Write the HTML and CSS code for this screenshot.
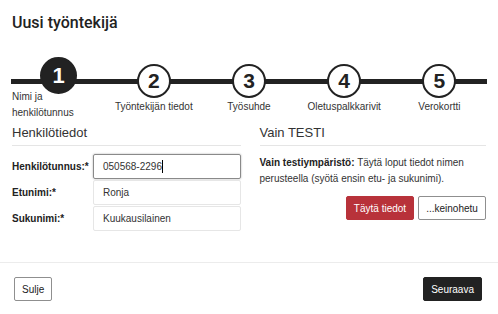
FILE: index.html
```html
<!DOCTYPE html>
<html lang="fi">
<head>
<meta charset="utf-8">
<title>Uusi työntekijä</title>
<link rel="stylesheet" href="styles.css">
</head>
<body>
<div class="page">
  <h1 class="title">Uusi työntekijä</h1>
  <div class="steps">
    <div class="step step-active"><div class="circle">1</div><div class="step-label">Nimi ja henkilötunnus</div></div>
    <div class="step"><div class="circle">2</div><div class="step-label">Työntekijän tiedot</div></div>
    <div class="step"><div class="circle">3</div><div class="step-label">Työsuhde</div></div>
    <div class="step"><div class="circle">4</div><div class="step-label">Oletuspalkkarivit</div></div>
    <div class="step"><div class="circle">5</div><div class="step-label">Verokortti</div></div>
  </div>
  <div class="columns">
    <section class="col">
      <h2 class="sec-title">Henkilötiedot</h2>
      <div class="form-row">
        <span class="field-label">Henkilötunnus:*</span>
        <div class="input input-focused">050568-2296<span class="caret"></span></div>
      </div>
      <div class="form-row">
        <span class="field-label">Etunimi:*</span>
        <div class="input">Ronja</div>
      </div>
      <div class="form-row">
        <span class="field-label">Sukunimi:*</span>
        <div class="input">Kuukausilainen</div>
      </div>
    </section>
    <section class="col">
      <h2 class="sec-title">Vain TESTI</h2>
      <p class="note"><b>Vain testiympäristö:</b> Täytä loput tiedot nimen perusteella (syötä ensin etu- ja sukunimi).</p>
      <div class="actions">
        <button class="btn btn-red btn-action">Täytä tiedot</button>
        <button class="btn btn-white btn-action">...keinohetu</button>
      </div>
    </section>
  </div>
</div>
<footer class="footer">
  <button class="btn btn-white btn-footer">Sulje</button>
  <button class="btn btn-dark btn-footer">Seuraava</button>
</footer>
</body>
</html>
```

FILE: styles.css
```css
* { box-sizing: border-box; }
html, body { margin: 0; background: #fff; }
body {
  font-family: "Liberation Sans", Arial, sans-serif;
  font-size: 10px;
  color: #333;
}
.page {
  padding: 13px 10px 0 12px;
  height: 262px;
}
.title {
  margin: 0;
  font-family: Roboto, "Liberation Sans", sans-serif;
  font-weight: 500;
  font-size: 16px;
  line-height: 20px;
  color: #222;
}
.steps {
  margin-top: 24px;
  display: grid;
  grid-template-columns: repeat(5, 1fr);
  align-items: center;
  background: linear-gradient(#222, #222) no-repeat 0 22px / 100% 5px;
  margin-left: -1px;
  margin-right: 1px;
}
.step {
  display: flex;
  flex-direction: column;
  align-items: center;
}
.circle {
  width: 34px;
  height: 34px;
  border-radius: 50%;
  border: 2.5px solid #222;
  background: #fff;
  color: #222;
  font-weight: bold;
  font-size: 21px;
  display: flex;
  align-items: center;
  justify-content: center;
}
.step-active .circle {
  width: 37px;
  height: 37px;
  background: #222;
  color: #fff;
  font-size: 22px;
}
.step-label {
  font-size: 10px;
  line-height: 16px;
  color: #333;
  text-align: center;
  margin-top: 1px;
}
.step-active .step-label {
  align-self: stretch;
  text-align: left;
  padding-left: 1px;
  margin-top: -5px;
}
.columns {
  margin-top: 3px;
  display: grid;
  grid-template-columns: 1fr 1fr;
  column-gap: 19px;
}
.sec-title {
  margin: 0 0 8px;
  font-weight: normal;
  font-size: 13px;
  line-height: 18px;
  padding-bottom: 3px;
  border-bottom: 1px solid #e5e5e5;
  color: #333;
}
.col:last-child .sec-title { margin-right: 2px; }
.form-row {
  display: flex;
  align-items: center;
  margin-bottom: 1px;
}
.field-label {
  width: 81px;
  flex: none;
  font-weight: bold;
  color: #222;
}
.input {
  flex: 1;
  height: 25px;
  border: 1px solid #e6e6e6;
  border-radius: 2px;
  padding: 0 9px;
  display: flex;
  align-items: center;
  color: #333;
  font-size: 10px;
}
.input-focused {
  border: 1px solid #8a8a8a;
  box-shadow: 0 0 2px rgba(0,0,0,0.35);
}
.caret {
  display: inline-block;
  width: 1px;
  height: 13px;
  background: #000;
}
.note {
  margin: 0;
  padding-top: 1px;
  line-height: 16px;
  color: #333;
}
.note b { color: #222; }
.actions {
  display: flex;
  justify-content: flex-end;
  gap: 4px;
  margin-top: 9px;
  margin-right: 2px;
}
.btn {
  font-family: "Liberation Sans", Arial, sans-serif;
  font-size: 10px;
  height: 24px;
  padding: 0 7px;
  border-radius: 2px;
  cursor: pointer;
}
.btn-action { width: 68px; padding: 0; }
.btn-red {
  background: #b8323a;
  border: 1px solid #b8323a;
  color: #fff;
}
.btn-white {
  background: #fff;
  border: 1px solid #8f8f8f;
  color: #222;
}
.btn-dark {
  background: #222;
  border: 1px solid #222;
  color: #fff;
}
.footer {
  border-top: 1px solid #ececec;
  display: flex;
  justify-content: space-between;
  padding: 14px 16px 0 14px;
}
.btn-footer {
  height: 24px;
  padding: 0 7px;
}
```
